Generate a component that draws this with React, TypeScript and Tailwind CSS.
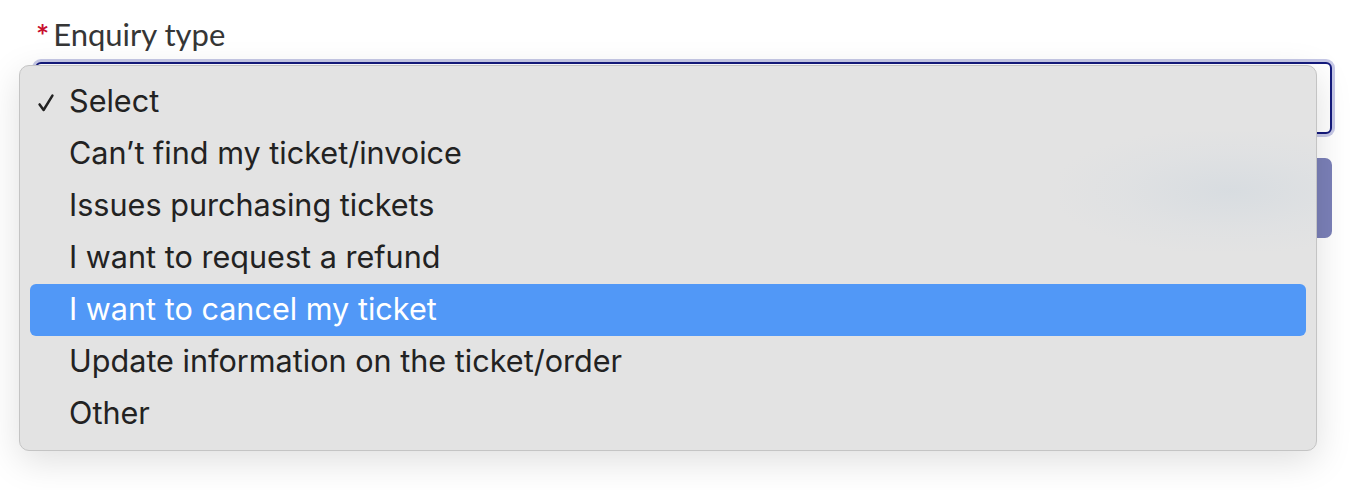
import React from "react";

const items = [
  "Select",
  "Can\u2019t find my ticket/invoice",
  "Issues purchasing tickets",
  "I want to request a refund",
  "I want to cancel my ticket",
  "Update information on the ticket/order",
  "Other",
];

export default function App() {
  return (
    <div className="relative w-[1358px] h-[490px] bg-white overflow-hidden">
      <div className="pl-[35px] pr-[26px] pt-[16px]">
        <div
          className="flex items-start h-[36px] text-[31px] leading-[36px] text-[#363636]"
          style={{ fontFamily: "Lato, 'Open Sans', sans-serif" }}
        >
          <span className="text-[#c8102e] text-[31px] leading-[38px] font-bold ml-[1px] mr-[4px]">*</span>
          <span>Enquiry type</span>
        </div>
        <div className="mt-[10px] h-[72px] rounded-[6px] border-2 border-[#141a7c] bg-white shadow-[0_0_0_3px_#c6c8e6]" />
        <div className="mt-[24px] h-[80px] rounded-[7px] bg-[#7b80b8]" />
      </div>

      <div className="absolute left-[19px] top-[65px] w-[1298px] h-[386px] rounded-[10px] border border-[#c4c4c4] bg-[#e3e3e3] shadow-[0_10px_36px_rgba(0,0,0,0.13)] overflow-hidden">
        <div className="absolute left-[1040px] top-[65px] w-[340px] h-[120px] bg-[radial-gradient(ellipse_at_center,rgba(205,214,222,0.5)_0%,rgba(216,221,226,0.3)_45%,rgba(227,227,227,0)_75%)]" />
        <div
          className="relative px-[10px] py-[10px]"
          style={{ fontFamily: "Inter, 'Noto Sans', sans-serif" }}
        >
          {items.map((t, i) => {
            const active = i === 4;
            return (
              <div
                key={t}
                className={
                  "relative flex items-center h-[52px] pl-[39px] pb-[3px] text-[30.6px] " +
                  (active ? "rounded-[6px] bg-[#5198f7] text-white" : "text-[#222222]")
                }
              >
                {i === 0 && (
                  <svg
                    className="absolute left-[8px] top-[18px]"
                    width="16"
                    height="18"
                    viewBox="0 0 16 18"
                    fill="none"
                  >
                    <path
                      d="M1.6 10.4 L5.6 16 L14.4 1.6"
                      stroke="#222222"
                      strokeWidth="2.5"
                      strokeLinecap="round"
                      strokeLinejoin="round"
                    />
                  </svg>
                )}
                <span>{t}</span>
              </div>
            );
          })}
        </div>
      </div>
    </div>
  );
}
